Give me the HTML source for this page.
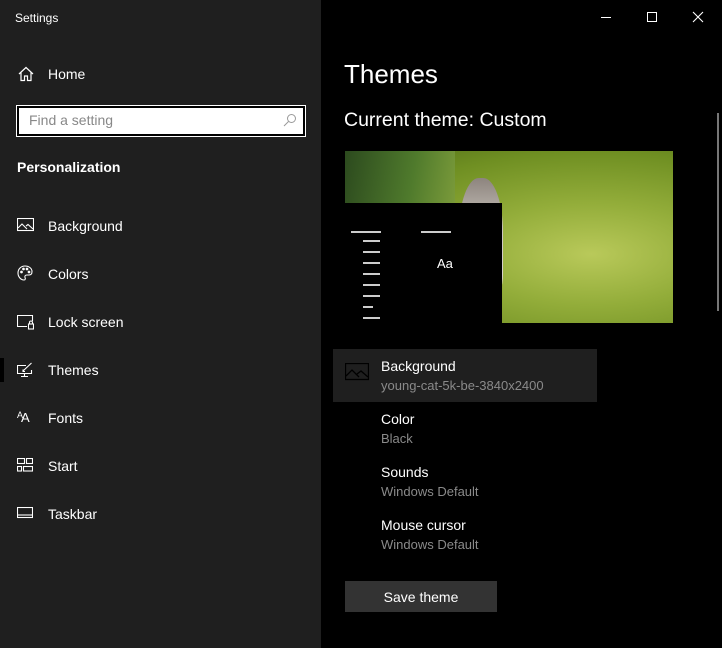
<!DOCTYPE html>
<html><head><style>
*{margin:0;padding:0;box-sizing:border-box}
body{width:722px;height:648px;background:#000;font-family:"Liberation Sans",sans-serif;position:relative;overflow:hidden;color:#fff}
.side{position:absolute;left:0;top:0;width:321px;height:648px;background:#1f1f1f}
.t{position:absolute;white-space:nowrap}
.nav{position:absolute;left:48px;font-size:14px;color:#fff}
.ic{position:absolute;left:17px}
.lbl{position:absolute;left:381px;font-size:14px;color:#fff}
.sub{position:absolute;left:381px;font-size:13px;color:#8a8a8a}
.ln{position:absolute;height:2px;background:#ccc}
</style></head><body>
<div class="side">
<div class="t" style="left:15px;top:11px;font-size:12px;color:#fff">Settings</div>
<svg class="ic" style="left:18px;top:66px" width="16" height="16" viewBox="0 0 16 16" fill="none" stroke="#fff" stroke-width="1.2"><path d="M1 8L8 1.5L15 8M3 6.5V14.5H6.5V10H9.5V14.5H13V6.5"/></svg>
<div class="nav" style="top:66px">Home</div>
<div style="position:absolute;left:17px;top:106px;width:288px;height:30px;background:#fff;border:2px solid #000;outline:1px solid #fff"></div>
<div class="t" style="left:29px;top:112px;font-size:14px;color:#888">Find a setting</div>
<svg style="position:absolute;left:283px;top:113px" width="14" height="14" viewBox="0 0 14 14" fill="none" stroke="#999" stroke-width="1"><circle cx="8.5" cy="5.5" r="4"/><path d="M5.5 8.5L1 13"/></svg>
<div class="t" style="left:17px;top:159px;font-size:14px;font-weight:bold">Personalization</div>

<svg class="ic" style="top:218px" width="17" height="14" viewBox="0 0 17 14" fill="none" stroke="#fff" stroke-width="1.1"><rect x="0.5" y="0.5" width="16" height="12"/><path d="M1 10L5 6L10 11M9 8L11 6.5L16 11"/></svg>
<div class="nav" style="top:218px">Background</div>
<svg class="ic" style="top:265px" width="16" height="16" viewBox="0 0 16 16" fill="none" stroke="#fff" stroke-width="1.1"><path d="M8 1C4 1 1 4 1 8s3 7 6 7c1.5 0 1.5-1.5 1-2.5s0-2.5 2-2.5h2c2 0 3-1.5 3-3.5C15 3.5 12 1 8 1z"/><circle cx="4.5" cy="7" r="0.8" fill="#fff"/><circle cx="6.5" cy="4" r="0.8" fill="#fff"/><circle cx="10" cy="4" r="0.8" fill="#fff"/><circle cx="12" cy="7" r="0.8" fill="#fff"/></svg>
<div class="nav" style="top:266px">Colors</div>
<svg class="ic" style="top:315px" width="17" height="15" viewBox="0 0 17 15" fill="none" stroke="#fff" stroke-width="1.1"><path d="M10 11.5H0.5V0.5H15.5V6"/><rect x="11.5" y="9" width="5" height="5"/><path d="M12.5 9V7.5a1.5 1.5 0 0 1 3 0V9"/></svg>
<div class="nav" style="top:314px">Lock screen</div>
<div style="position:absolute;left:0;top:358px;width:4px;height:24px;background:#000"></div>
<svg class="ic" style="top:362px" width="16" height="16" viewBox="0 0 16 16" fill="none" stroke="#fff" stroke-width="1.1"><path d="M9 3.5H0.5V11.5H14.5V8M7.5 11.5V14.5M4 14.5H11"/><path d="M6 9L14.5 1M8 9.5L6 9.5L6 7.5"/></svg>
<div class="nav" style="top:362px">Themes</div>
<div class="t" style="left:17px;top:410px;font-size:13px;color:#fff;letter-spacing:-2px"><span style="font-size:9px;vertical-align:4px">A</span>A</div>
<div class="nav" style="top:410px">Fonts</div>
<svg class="ic" style="top:458px" width="16" height="14" viewBox="0 0 16 14" fill="none" stroke="#fff" stroke-width="1.1"><rect x="0.5" y="0.5" width="7" height="5"/><rect x="9.5" y="0.5" width="6" height="5"/><rect x="0.5" y="8.5" width="4" height="4.5"/><rect x="6.5" y="8.5" width="9" height="4.5"/></svg>
<div class="nav" style="top:458px">Start</div>
<svg class="ic" style="top:507px" width="16" height="12" viewBox="0 0 16 12" fill="none" stroke="#fff" stroke-width="1.1"><rect x="0.5" y="0.5" width="15" height="10"/><path d="M0.5 8H15.5"/></svg>
<div class="nav" style="top:506px">Taskbar</div>
</div>

<div style="position:absolute;left:601px;top:17px;width:10px;height:1px;background:#fff"></div>
<div style="position:absolute;left:647px;top:12px;width:10px;height:10px;border:1px solid #fff"></div>
<svg style="position:absolute;left:692px;top:11px" width="12" height="12" viewBox="0 0 12 12" stroke="#fff" stroke-width="1.1"><path d="M1 1L11 11M11 1L1 11"/></svg>
<div style="position:absolute;left:717px;top:113px;width:2px;height:198px;background:#777"></div>

<div class="t" style="left:344px;top:59px;font-size:26px">Themes</div>
<div class="t" style="left:344px;top:109px;font-size:19.5px">Current theme: Custom</div>

<div style="position:absolute;left:345px;top:151px;width:328px;height:172px;background:radial-gradient(ellipse at 75% 60%,#b9c95a 0%,#93ad3a 35%,#6f8f22 70%,#4d6a18 100%)"></div>
<div style="position:absolute;left:345px;top:151px;width:110px;height:52px;background:linear-gradient(100deg,#2c4a1e,#4f7a2c 60%,#7a9a3a)"></div>
<div style="position:absolute;left:459px;top:178px;width:44px;height:120px;background:linear-gradient(#8d847e,#c9c4bd 40%,#dedad2);border-radius:45% 45% 20% 20%"></div>
<div style="position:absolute;left:345px;top:203px;width:157px;height:120px;background:#000"></div>
<div class="ln" style="left:351px;top:231px;width:30px"></div>
<div class="ln" style="left:421px;top:231px;width:30px"></div>
<div class="ln" style="left:363px;top:240px;width:17px"></div>
<div class="ln" style="left:363px;top:251px;width:17px"></div>
<div class="ln" style="left:363px;top:262px;width:17px"></div>
<div class="ln" style="left:363px;top:273px;width:17px"></div>
<div class="ln" style="left:363px;top:284px;width:17px"></div>
<div class="ln" style="left:363px;top:295px;width:17px"></div>
<div class="ln" style="left:363px;top:306px;width:10px"></div>
<div class="ln" style="left:363px;top:317px;width:17px"></div>
<div class="t" style="left:437px;top:256px;font-size:13px">Aa</div>

<div style="position:absolute;left:333px;top:349px;width:264px;height:53px;background:#1f1f1f"></div>
<svg style="position:absolute;left:345px;top:363px" width="24" height="18" viewBox="0 0 24 18" fill="none" stroke="#000" stroke-width="1.3"><rect x="0.5" y="0.5" width="23" height="16"/><path d="M1 13L7 7L14 14M12 11L16 8L23 14"/></svg>
<div class="lbl" style="top:358px">Background</div>
<div class="sub" style="top:378px">young-cat-5k-be-3840x2400</div>
<div class="lbl" style="top:411px">Color</div>
<div class="sub" style="top:431px">Black</div>
<div class="lbl" style="top:464px">Sounds</div>
<div class="sub" style="top:484px">Windows Default</div>
<div class="lbl" style="top:517px">Mouse cursor</div>
<div class="sub" style="top:537px">Windows Default</div>
<div style="position:absolute;left:345px;top:581px;width:152px;height:31px;background:#333"></div>
<div class="t" style="left:345px;top:589px;width:152px;text-align:center;font-size:14px">Save theme</div>
</body></html>
